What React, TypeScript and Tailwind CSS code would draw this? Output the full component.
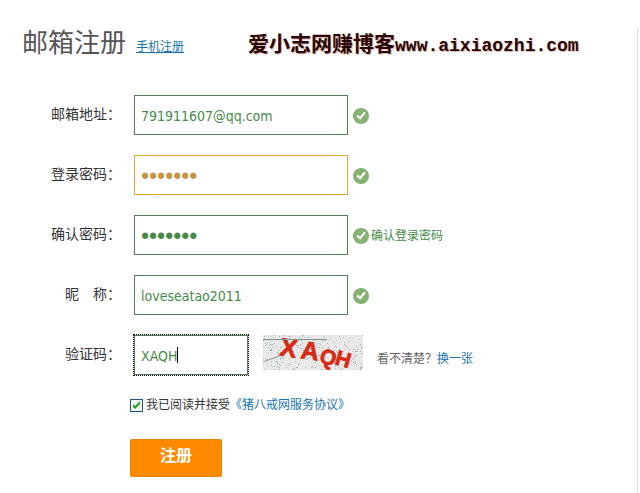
import { useState } from "react";
import type { InputHTMLAttributes, ReactNode } from "react";

function CheckBadge() {
  return (
    <svg className="size-4 shrink-0" viewBox="0 0 16 16" aria-hidden="true">
      <circle cx="8" cy="8" r="8" fill="#85b172" />
      <path d="M3.4 8.3 5 6.8 7 8.8 11.3 3.6 12.8 5 7.2 11.7Z" fill="#fff" />
    </svg>
  );
}

const specks = ["#9db9c6", "#c5aacd", "#9fcbb0", "#a6aac8", "#d0bac1", "#8fa9a2"];

// spreads the captcha noise without visible rows
function noise(n: number) {
  const v = Math.sin(n * 12.9898) * 43758.5453;
  return v - Math.floor(v);
}

function Captcha() {
  return (
    <svg className="h-[35px] w-[100px] overflow-visible" viewBox="0 0 100 35" role="img" aria-label="验证码">
      <rect width="100" height="35" fill="#e8e8e6" />
      {Array.from({ length: 260 }, (_, i) => (
        <rect
          key={i}
          x={Math.floor(noise(i + 1) * 100)}
          y={Math.floor(noise(i + 501) * 35)}
          width="1"
          height="1"
          fill={specks[i % specks.length]}
        />
      ))}
      <path d="M0 27 16 21" stroke="#8795a8" strokeWidth="1" />
      <text
        x="16 37 55 71"
        y="20 23 26 29"
        rotate="10 8 22 16"
        fill="#d62a16"
        stroke="#d62a16"
        strokeWidth="0.8"
        fontWeight="700"
        fontFamily="Liberation Sans, sans-serif"
      >
        <tspan fontSize="25">XA</tspan>
        <tspan fontSize="21">QH</tspan>
      </text>
      <path d="M0 4.5H64" stroke="#7d9585" strokeWidth="1" />
    </svg>
  );
}

type FieldProps = InputHTMLAttributes<HTMLInputElement> & {
  id: string;
  label: string;
  tone?: string;
  children?: ReactNode;
};

const plain = "border-[#4f7f55] text-[#468a49] font-['DejaVu_Sans_Condensed','DejaVu_Sans',sans-serif] text-sm";

function Field({ id, label, tone = plain, children, ...rest }: FieldProps) {
  return (
    <div className="flex h-10 items-center">
      <label htmlFor={id} className="mr-[13px] w-[121px] whitespace-pre pb-0.5 text-right text-sm text-[#333]">
        {label}
      </label>
      <input id={id} className={`h-10 w-[214px] border bg-white px-1.5 pt-0.5 outline-none ${tone}`} {...rest} />
      <div className="ml-[5px] flex items-center gap-0.5 pt-0.5 text-xs text-[#468a49]">
        <CheckBadge />
        {children}
      </div>
    </div>
  );
}

export default function App() {
  const [email, setEmail] = useState("791911607@qq.com");
  const [password, setPassword] = useState("1234567");
  const [confirm, setConfirm] = useState("1234567");
  const [nick, setNick] = useState("loveseatao2011");
  const [code, setCode] = useState("XAQH");
  const [agree, setAgree] = useState(true);

  return (
    <div className="min-h-screen bg-white pr-0.5 pt-7 font-['Liberation_Sans','Noto_Sans_CJK_SC',sans-serif]">
      <main className="min-h-[465px] border-r border-[#ddd]">
        <header className="flex h-8 items-center pb-0.5 pl-[22px]">
          <h1 className="text-[26px] leading-8 text-[#555]">邮箱注册</h1>
          <a href="#phone" className="ml-2.5 mt-2 text-xs text-[#1a73b0] underline">
            手机注册
          </a>
          <p className="ml-16 flex items-baseline font-['Noto_Sans_CJK_SC',sans-serif] text-[21px] leading-8 font-bold whitespace-nowrap text-[#2a0505] [text-shadow:1px_1px_1px_#d9b3ad]">
            爱小志网赚博客
            <span className="font-['Liberation_Mono',monospace] text-lg">www.aixiaozhi.com</span>
          </p>
        </header>

        <form className="mt-[35px] flex flex-col gap-5" onSubmit={(e) => e.preventDefault()}>
          <Field id="email" label="邮箱地址：" value={email} onChange={(e) => setEmail(e.target.value)} />
          <Field
            id="password"
            label="登录密码："
            type="password"
            tone="border-[#dba53a] text-[#c1964a] font-['Liberation_Sans',sans-serif] text-[23px]"
            value={password}
            onChange={(e) => setPassword(e.target.value)}
          />
          <Field
            id="confirm"
            label="确认密码："
            type="password"
            tone="border-[#4f7f55] text-[#468a49] font-['Liberation_Sans',sans-serif] text-[23px]"
            value={confirm}
            onChange={(e) => setConfirm(e.target.value)}
          >
            <span>确认登录密码</span>
          </Field>
          <Field id="nick" label="昵　称：" value={nick} onChange={(e) => setNick(e.target.value)} />

          <div className="flex h-10 items-center">
            <label htmlFor="code" className="mr-[13px] w-[121px] pb-0.5 text-right text-sm text-[#333]">
              验证码：
            </label>
            <div className="relative">
              <input
                id="code"
                className="block h-10 w-[114px] border border-[#4f7f55] bg-white px-1.5 pt-0.5 font-['DejaVu_Sans_Condensed','DejaVu_Sans',sans-serif] text-sm text-[#468a49] outline-1 outline-dotted outline-black"
                value={code}
                onChange={(e) => setCode(e.target.value)}
              />
              {/* text caret */}
              <span className="absolute left-[43px] top-3 h-4 w-px bg-black" />
            </div>
            <div className="ml-[15px] self-start">
              <Captcha />
            </div>
            <p className="ml-3.5 mt-2 text-xs text-[#666]">
              看不清楚？
              <a href="#refresh" className="text-[#1a73b0]">
                换一张
              </a>
            </p>
          </div>

          <div className="flex h-5 items-center pl-[130px] text-xs text-[#333]">
            <span className="relative mr-[3px] flex size-[13px]">
              <input
                id="agree"
                type="checkbox"
                className="size-[13px] appearance-none border border-[#1c5180] bg-[#f3f3ef]"
                checked={agree}
                onChange={(e) => setAgree(e.target.checked)}
              />
              {agree && (
                <svg className="pointer-events-none absolute inset-0 size-[13px]" viewBox="0 0 13 13" aria-hidden="true">
                  <path d="M3 5v3l2 2 5-5V2L5 7Z" fill="#21a121" />
                </svg>
              )}
            </span>
            <label htmlFor="agree">我已阅读并接受</label>
            <a href="#terms" className="text-[#1a73b0]">
              《猪八戒网服务协议》
            </a>
          </div>

          <button
            type="submit"
            className="ml-[130px] mt-1 h-[38px] w-[92px] rounded-xs border border-[#e98305] bg-[#ff8a00] pb-1 text-base font-bold text-white"
          >
            注册
          </button>
        </form>
      </main>
    </div>
  );
}
